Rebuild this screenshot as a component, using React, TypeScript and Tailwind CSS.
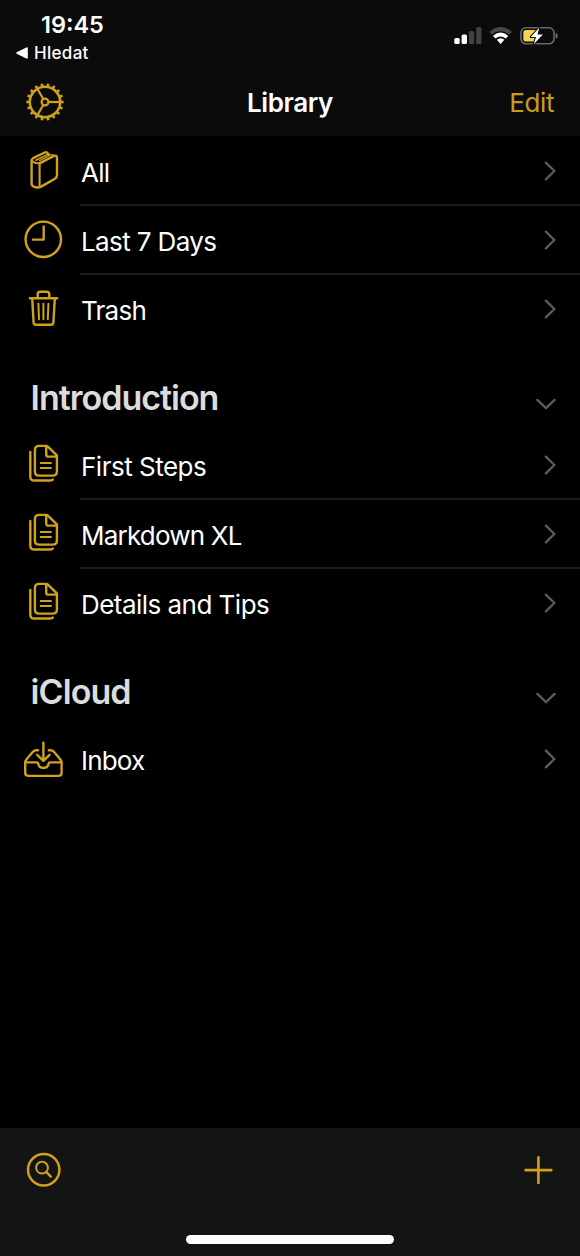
import type { ReactNode } from "react";

function Icon({ children }: { children: ReactNode }) {
  return (
    <svg
      width="44"
      height="44"
      viewBox="0 0 44 44"
      fill="none"
      stroke="currentColor"
      strokeWidth="2.4"
      strokeLinecap="round"
      strokeLinejoin="round"
      className="shrink-0 text-[#d0a21a]"
    >
      {children}
    </svg>
  );
}

const BookIcon = () => (
  <Icon>
    <path d="M18.6 15.4 32.4 8.1Q36 6.6 36 10.2V27Q36 29.4 33.9 30.7L20.5 38.4Q18 39.8 14.8 39.3 10.6 38.6 10.6 35.5V12.6Q10.6 11 12.1 10.2L23.8 4.5Q25.6 3.8 26.8 5.4L27.8 6.8" />
    <path d="M10.9 12.4Q12.2 15.3 18.6 15.4V38.8" strokeWidth="2.1" />
    <path d="M14.8 12.2 27.8 5.9" strokeWidth="1.6" />
    <path d="M18.6 12.6 29.8 6.8Q31.8 6.2 33.2 7.6" strokeWidth="1.2" />
  </Icon>
);

const ClockIcon = () => (
  <Icon>
    <circle cx="22.3" cy="22.3" r="17.7" />
    <path d="M22.7 9.5V22.6H12" />
  </Icon>
);

const TrashIcon = () => (
  <Icon>
    <path d="M8.8 12.3H36.2M16.7 12V8.3Q16.7 5.8 19.2 5.8H25.8Q28.3 5.8 28.3 8.3V12" />
    <path d="M11.2 12.5 12.6 36.4Q12.8 38.8 15.2 38.8H29.8Q32.2 38.8 32.4 36.4L33.8 12.5" />
    <path d="M17.4 17.8 18 33.2M22.4 17.8V33.2M27.4 17.8 26.8 33.2" strokeWidth="2" />
  </Icon>
);

const SheetsIcon = () => (
  <Icon>
    <path d="M25.5 3.9H18.2Q13.9 3.9 13.9 8.2V29.4Q13.9 33.6 18.2 33.6H31.6Q35.9 33.6 35.9 29.4V13.4L26.6 4.4Q26.1 3.9 25.5 3.9ZM25.2 4V12.4Q25.2 14.6 27.4 14.6H35.6" />
    <path d="M9.3 10V34.4Q9.3 38.5 13.5 38.5H28.4Q30.8 38.5 31.8 37.6" />
    <path d="M18.9 21H30.7M18.9 26H30.7" strokeWidth="2" strokeLinecap="butt" />
  </Icon>
);

const InboxIcon = () => (
  <Icon>
    <path d="M17 14.2H15.4Q13.3 14.2 11.9 15.8L5.2 23.8Q4.2 25 4.2 26.5V36.5Q4.2 39.9 7.6 39.9H37.2Q40.6 39.9 40.6 36.5V26.5Q40.6 25 39.6 23.8L32.9 15.8Q31.5 14.2 29.4 14.2H27.8" />
    <path d="M4.6 26.4H15.6Q17 26.4 17.2 27.8 18 32 22.4 32 26.8 32 27.6 27.8 27.8 26.4 29.2 26.4H40.2" />
    <path d="M22.4 6.6V24.4M16.2 18.8 22.4 24.8 28.6 18.8" />
  </Icon>
);

const teeth = Array.from({ length: 18 }, (_, i) => i * 20);

const GearIcon = () => (
  <svg width="38" height="38" viewBox="-19 -19 38 38" fill="none" stroke="currentColor" strokeWidth="2.5">
    <circle r="15.2" />
    <circle r="3.4" strokeWidth="2.2" />
    {teeth.map((a) => (
      <path key={a} d="M16 0H18.6" strokeWidth="2.6" transform={`rotate(${a})`} />
    ))}
    {[0, 120, 240].map((a) => (
      <path key={a} d="M3.8 0H15" strokeWidth="2.2" transform={`rotate(${a})`} />
    ))}
  </svg>
);

function StatusIcons() {
  return (
    <svg width="106" height="20" viewBox="453 26 106 20" className="mt-[26px]">
      <rect x="454.3" y="38" width="5.4" height="6" rx="1.6" fill="#fff" />
      <rect x="461.6" y="34.6" width="5.4" height="9.4" rx="1.6" fill="#fff" />
      <rect x="468.9" y="31" width="5.3" height="13" rx="1.6" fill="#424242" />
      <rect x="476.2" y="27" width="5.3" height="17" rx="1.6" fill="#424242" />
      <path d="M489.2 31.9Q500.6 22.3 512 31.9L509.4 34.6Q500.6 27.2 491.8 34.6Z" fill="#484848" />
      <path d="M492.9 35.9Q500.6 29.3 508.3 35.9L505.7 38.5Q500.6 34.6 495.5 38.5Z" fill="#fff" />
      <path d="M496.8 39.8Q500.6 36.8 504.4 39.8L500.6 44Z" fill="#fff" />
      <rect x="521" y="27.8" width="33" height="16" rx="5" fill="none" stroke="#6a6a6a" strokeWidth="1.6" />
      <path d="M555.6 32.8Q557.8 33.4 557.8 35.8T555.6 38.8Z" fill="#6a6a6a" />
      <rect x="523.3" y="30" width="13.5" height="11.6" rx="2.8" fill="#f7d44c" />
      <path
        d="M539.4 27.6 530.7 37H536L533.8 44.2 542.8 34.6H537.5Z"
        fill="#fff"
        stroke="#0b0b0b"
        strokeWidth="2"
        paintOrder="stroke"
        strokeLinejoin="round"
      />
    </svg>
  );
}

const ChevronRight = () => (
  <svg width="12" height="20" viewBox="0 0 12 20" fill="none" stroke="#5b5b5d" strokeWidth="2.4" strokeLinecap="round" className="mr-6">
    <path d="M1.9 1.7 10.4 10 1.9 18.3" />
  </svg>
);

const ChevronDown = () => (
  <svg width="20" height="12" viewBox="0 0 20 12" fill="none" stroke="#5b5b5d" strokeWidth="2.4" strokeLinecap="round" className="mt-[33px] mr-6">
    <path d="M1.4 1.9 10 10 18.6 1.9" />
  </svg>
);

function Row({ icon, label, tracking, divider }: { icon: ReactNode; label: string; tracking: string; divider?: boolean }) {
  return (
    <li className="flex h-[69px] pl-[21px]">
      <div className="pt-[11px]">{icon}</div>
      <div
        className={`ml-[15px] flex flex-1 items-center justify-between border-b-2 pl-px ${
          divider ? "border-[#1b1b1d]" : "border-transparent"
        }`}
      >
        <span className={`pt-[4px] text-[26px] leading-8 whitespace-nowrap text-white ${tracking}`}>{label}</span>
        <ChevronRight />
      </div>
    </li>
  );
}

function SectionHeader({ title, tracking }: { title: string; tracking: string }) {
  return (
    <div className="flex h-[87px] items-center justify-between pl-[30.5px]">
      <h2 className={`pt-[21px] text-[34px] leading-10 font-semibold text-[#dcdcdc] ${tracking}`}>{title}</h2>
      <ChevronDown />
    </div>
  );
}

export default function App() {
  return (
    <div className="flex h-[1256px] w-[580px] flex-col overflow-hidden bg-black font-['Inter',sans-serif]">
      <header className="h-[136px] bg-[#0b0b0b]">
        <div className="flex h-[68px] justify-between pr-[21px] pl-4">
          <div className="pt-[10px] text-white">
            <div className="pl-[25px] text-[23.5px] leading-[29px] font-semibold">19:45</div>
            <div className="flex items-center gap-1.5 pt-[2px]">
              <svg width="12" height="12" viewBox="0 0 12 12" fill="#fff">
                <path d="M.7 5.3 10.4.5Q11.8 0 11.8 1.4V10.6Q11.8 12 10.4 11.5L.7 6.7Q-.2 6 .7 5.3Z" />
              </svg>
              <span className="text-[17px] leading-6 font-medium tracking-[0.3px]">Hledat</span>
            </div>
          </div>
          <StatusIcons />
        </div>
        <div className="grid h-[68px] grid-cols-3 items-center pr-[26px] pl-[26px] text-[#d0a21a]">
          <div>
            <GearIcon />
          </div>
          <h1 className="pt-px text-center text-[26px] leading-8 font-semibold tracking-[-0.4px] whitespace-nowrap text-white">Library</h1>
          <span className="pt-px text-right text-[26px] leading-8 tracking-[-0.4px] text-[#c99d1c]">Edit</span>
        </div>
      </header>

      <main className="flex-1 pt-px">
        <ul>
          <Row icon={<BookIcon />} label="All" tracking="tracking-[-0.7px]" divider />
          <Row icon={<ClockIcon />} label="Last 7 Days" tracking="tracking-[-0.62px]" divider />
          <Row icon={<TrashIcon />} label="Trash" tracking="tracking-[-0.75px]" />
        </ul>
        <SectionHeader title="Introduction" tracking="tracking-[-1px]" />
        <ul>
          <Row icon={<SheetsIcon />} label="First Steps" tracking="tracking-[-0.5px]" divider />
          <Row icon={<SheetsIcon />} label="Markdown XL" tracking="tracking-[-0.8px]" divider />
          <Row icon={<SheetsIcon />} label="Details and Tips" tracking="tracking-[-0.53px]" />
        </ul>
        <SectionHeader title="iCloud" tracking="tracking-[-0.9px]" />
        <ul>
          <Row icon={<InboxIcon />} label="Inbox" tracking="tracking-[-0.8px]" />
        </ul>
      </main>

      <footer className="flex h-[128px] flex-col items-center justify-between bg-[#141414] pb-3">
        <div className="flex w-full items-center justify-between px-[26px] pt-6 text-[#d0a21a]">
          <svg width="36" height="36" viewBox="0 0 36 36" fill="none" stroke="currentColor">
            <circle cx="17.7" cy="17.7" r="15.7" strokeWidth="2.5" />
            <circle cx="16" cy="15.7" r="5.9" strokeWidth="2" />
            <path d="M20.3 20 24.8 24.6" strokeWidth="2.4" strokeLinecap="round" />
          </svg>
          <svg width="30" height="30" viewBox="0 0 30 30" fill="none" stroke="currentColor" strokeWidth="2.6" strokeLinecap="round" className="mb-px">
            <path d="M14.4 2.2V28M1.5 15.1H27.3" />
          </svg>
        </div>
        <div className="h-[9px] w-[208px] rounded-full bg-white" />
      </footer>
    </div>
  );
}
